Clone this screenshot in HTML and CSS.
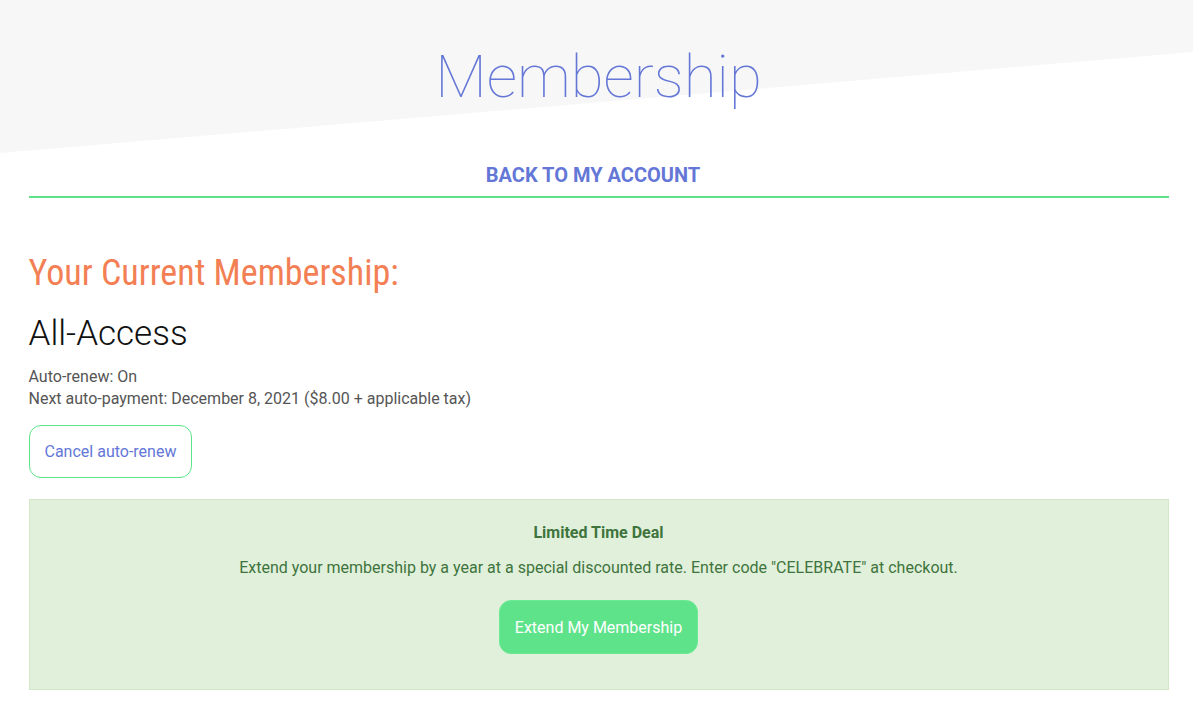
FILE: index.html
```
<!DOCTYPE html>
<html lang="en">
<head>
<meta charset="utf-8">
<title>Membership</title>
<link rel="stylesheet" href="styles.css">
</head>
<body>
<div class="page">
  <header class="hero">
    <h1 class="hero-title">Membership</h1>
  </header>
  <main class="container">
    <nav class="back-nav">
      <a class="back-link" href="#">BACK TO MY ACCOUNT</a>
    </nav>
    <section class="current">
      <h2 class="current-heading">Your Current Membership:</h2>
      <h3 class="plan-name">All-Access</h3>
      <p class="plan-meta">Auto-renew: On<br>Next auto-payment: December 8, 2021 ($8.00 + applicable tax)</p>
      <button class="btn-outline" type="button">Cancel auto-renew</button>
    </section>
    <section class="deal">
      <h4 class="deal-title">Limited Time Deal</h4>
      <p class="deal-text">Extend your membership by a year at a special discounted rate. Enter code "CELEBRATE" at checkout.</p>
      <button class="btn-solid" type="button">Extend My Membership</button>
    </section>
  </main>
</div>
</body>
</html>
```
FILE: styles.css
```
* { box-sizing: border-box; }
html, body { margin: 0; padding: 0; background: #fff; }
body { font-family: Roboto, "Noto Sans", Arial, sans-serif; color: #555; }

.page { position: relative; min-height: 702px; padding-left: 4px; }

.hero {
  position: relative;
  height: 153px;
  display: flex;
  justify-content: center;
}
.hero::before {
  content: "";
  position: absolute;
  top: 0;
  bottom: 0;
  left: -4px;
  right: 0;
  background: #f7f7f7;
  clip-path: polygon(0 0, 100% 0, 100% 52px, 0 100%);
  z-index: 0;
}
.hero-title {
  position: relative;
  z-index: 1;
  margin: 32px 0 0;
  font-family: Roboto, sans-serif;
  font-weight: 100;
  font-size: 60px;
  line-height: 89px;
  color: #6477d7;
}

.container {
  max-width: 1140px;
  margin: 0 auto;
}

.back-nav {
  display: flex;
  justify-content: center;
  padding: 10px 0 9px;
  border-bottom: 2px solid #5ee38a;
}
.back-link {
  margin-right: 11px;
  font-family: Roboto, sans-serif;
  font-weight: 700;
  font-size: 20px;
  line-height: 24px;
  color: #6477d7;
  text-decoration: none;
}

.current { padding-top: 55px; }
.current-heading {
  margin: 0;
  font-family: "Roboto Condensed", Roboto, sans-serif;
  font-stretch: condensed;
  font-weight: 400;
  font-size: 36px;
  line-height: 40px;
  color: #f37f55;
}
.plan-name {
  margin: 19px 0 0;
  font-weight: 300;
  font-size: 35px;
  line-height: 44px;
  color: #111;
}
.plan-meta {
  margin: 10px 0 0;
  font-size: 16px;
  line-height: 22px;
  color: #555;
}
.btn-outline {
  margin-top: 15px;
  height: 53px;
  padding: 0 15px;
  background: #fff;
  border: 1px solid #5ee38a;
  border-radius: 12px;
  font-family: Roboto, sans-serif;
  font-size: 16px;
  color: #6477d7;
  cursor: pointer;
}

.deal {
  margin-top: 21px;
  background: #e1f0da;
  border: 1px solid #d3e8c9;
  padding: 24px 20px 35px;
  display: flex;
  flex-direction: column;
  align-items: center;
  color: #3e743d;
}
.deal-title {
  margin: 0;
  font-weight: 700;
  font-size: 16px;
  line-height: 18px;
}
.deal-text {
  margin: 16px 0 0;
  font-size: 16px;
  line-height: 20px;
}
.btn-solid {
  margin-top: 22px;
  height: 54px;
  padding: 0 15px;
  background: #5ee38a;
  border: 1px solid #6bea95;
  border-radius: 12px;
  font-family: Roboto, sans-serif;
  font-size: 16px;
  color: #fff;
  cursor: pointer;
}
```
